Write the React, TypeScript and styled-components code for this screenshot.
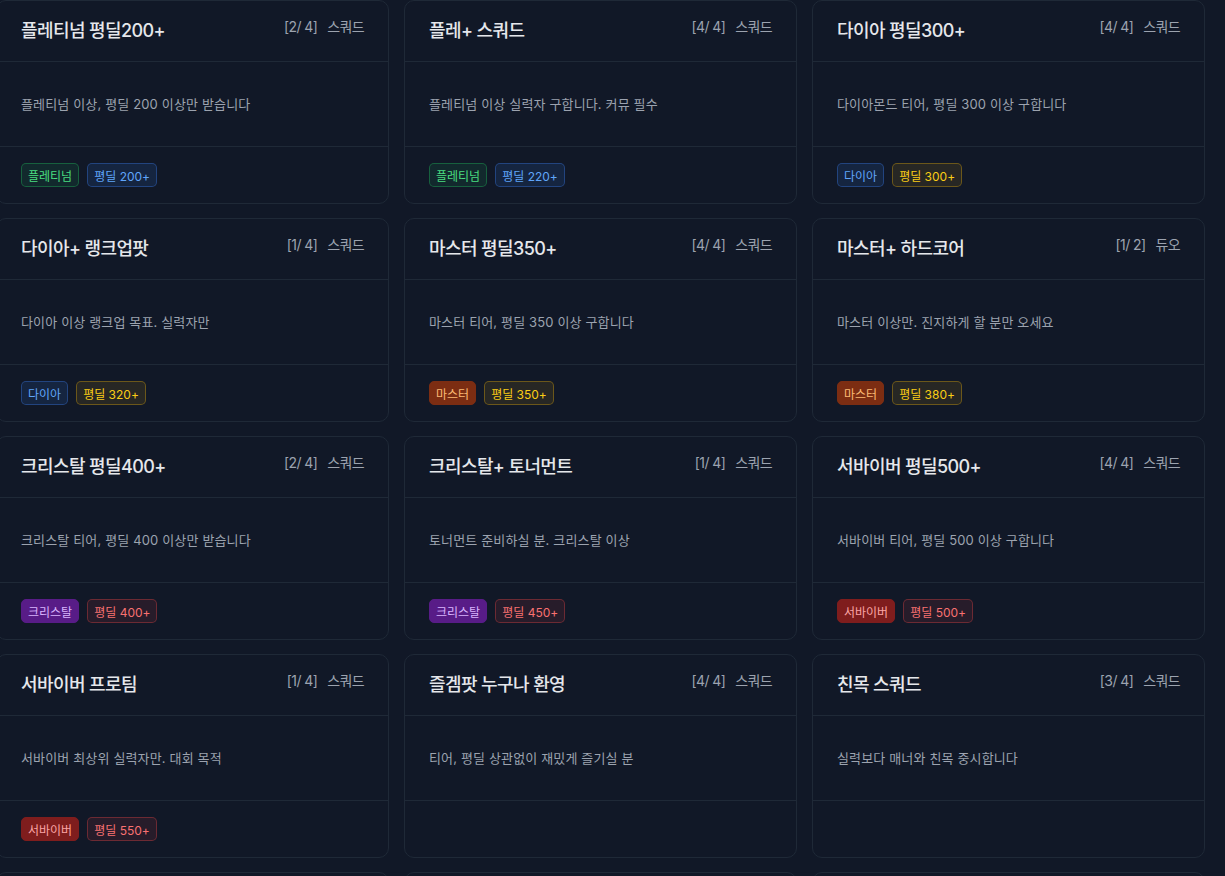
import React from "react";
import styled, { createGlobalStyle, css } from "styled-components";

const GlobalStyle = createGlobalStyle`
  html, body {
    margin: 0;
    padding: 0;
    background: #111827;
    overflow: hidden;
    height: 100%;
  }
  body {
    font-family: "Inter", "Noto Sans CJK KR", sans-serif;
    -webkit-font-smoothing: antialiased;
  }
  * { box-sizing: border-box; }
`;

type Tone = "green" | "blue" | "yellow" | "red" | "master" | "crystal" | "survivor";

const tones: Record<Tone, { bg: string; fg: string; bd: string }> = {
  green: { bg: "rgba(34,197,94,0.10)", fg: "#4ade80", bd: "rgba(34,197,94,0.35)" },
  blue: { bg: "rgba(59,130,246,0.12)", fg: "#60a5fa", bd: "rgba(59,130,246,0.35)" },
  yellow: { bg: "rgba(234,179,8,0.10)", fg: "#facc15", bd: "rgba(234,179,8,0.35)" },
  red: { bg: "rgba(239,68,68,0.10)", fg: "#f87171", bd: "rgba(239,68,68,0.35)" },
  master: { bg: "#7c2d12", fg: "#fdba74", bd: "#7c2d12" },
  crystal: { bg: "#581c87", fg: "#d8b4fe", bd: "#581c87" },
  survivor: { bg: "#7f1d1d", fg: "#fca5a5", bd: "#7f1d1d" },
};

const Grid = styled.div`
  display: grid;
  grid-template-columns: repeat(3, 393px);
  column-gap: 15px;
  row-gap: 14px;
  margin-left: -4px;
`;

const Card = styled.div`
  display: flex;
  flex-direction: column;
  border: 1px solid #1f2937;
  border-radius: 10px;
  background: #111827;
  height: 204px;
`;

const Header = styled.div`
  display: flex;
  justify-content: space-between;
  align-items: flex-start;
  padding: 16px 24px;
  height: 61px;
  border-bottom: 1px solid #1f2937;
`;

const Title = styled.h3`
  margin: 0;
  font-size: 18px;
  line-height: 28px;
  font-weight: 500;
  color: #e5e7eb;
  letter-spacing: -0.6px;
`;

const Meta = styled.div`
  display: flex;
  gap: 10px;
  font-size: 14px;
  line-height: 20px;
  color: #9ca3af;
  letter-spacing: -0.6px;
`;

const Body = styled.div`
  height: 85px;
  padding: 0 24px;
  display: flex;
  align-items: center;
  border-bottom: 1px solid #1f2937;
`;

const Desc = styled.p`
  margin: 0;
  font-size: 13px;
  line-height: 20px;
  color: #9ca3af;
  letter-spacing: 0.15px;
  padding-bottom: 1px;
`;

const Footer = styled.div`
  display: flex;
  align-items: center;
  gap: 8px;
  padding: 0 24px;
  flex: 1;
`;

const Badge = styled.span<{ $tone: Tone }>`
  display: inline-flex;
  align-items: center;
  height: 24px;
  padding: 0 6px;
  border-radius: 5px;
  font-size: 12px;
  ${({ $tone }) => css`
    background: ${tones[$tone].bg};
    color: ${tones[$tone].fg};
    border: 1px solid ${tones[$tone].bd};
  `}
`;

type Party = {
  title: string;
  count: string;
  mode: string;
  desc: string;
  badges: { label: string; tone: Tone }[];
};

const parties: Party[] = [
  { title: "플레티넘 평딜200+", count: "[2/ 4]", mode: "스쿼드", desc: "플레티넘 이상, 평딜 200 이상만 받습니다", badges: [{ label: "플레티넘", tone: "green" }, { label: "평딜 200+", tone: "blue" }] },
  { title: "플레+ 스쿼드", count: "[4/ 4]", mode: "스쿼드", desc: "플레티넘 이상 실력자 구합니다. 커뮤 필수", badges: [{ label: "플레티넘", tone: "green" }, { label: "평딜 220+", tone: "blue" }] },
  { title: "다이아 평딜300+", count: "[4/ 4]", mode: "스쿼드", desc: "다이아몬드 티어, 평딜 300 이상 구합니다", badges: [{ label: "다이아", tone: "blue" }, { label: "평딜 300+", tone: "yellow" }] },
  { title: "다이아+ 랭크업팟", count: "[1/ 4]", mode: "스쿼드", desc: "다이아 이상 랭크업 목표. 실력자만", badges: [{ label: "다이아", tone: "blue" }, { label: "평딜 320+", tone: "yellow" }] },
  { title: "마스터 평딜350+", count: "[4/ 4]", mode: "스쿼드", desc: "마스터 티어, 평딜 350 이상 구합니다", badges: [{ label: "마스터", tone: "master" }, { label: "평딜 350+", tone: "yellow" }] },
  { title: "마스터+ 하드코어", count: "[1/ 2]", mode: "듀오", desc: "마스터 이상만. 진지하게 할 분만 오세요", badges: [{ label: "마스터", tone: "master" }, { label: "평딜 380+", tone: "yellow" }] },
  { title: "크리스탈 평딜400+", count: "[2/ 4]", mode: "스쿼드", desc: "크리스탈 티어, 평딜 400 이상만 받습니다", badges: [{ label: "크리스탈", tone: "crystal" }, { label: "평딜 400+", tone: "red" }] },
  { title: "크리스탈+ 토너먼트", count: "[1/ 4]", mode: "스쿼드", desc: "토너먼트 준비하실 분. 크리스탈 이상", badges: [{ label: "크리스탈", tone: "crystal" }, { label: "평딜 450+", tone: "red" }] },
  { title: "서바이버 평딜500+", count: "[4/ 4]", mode: "스쿼드", desc: "서바이버 티어, 평딜 500 이상 구합니다", badges: [{ label: "서바이버", tone: "survivor" }, { label: "평딜 500+", tone: "red" }] },
  { title: "서바이버 프로팀", count: "[1/ 4]", mode: "스쿼드", desc: "서바이버 최상위 실력자만. 대회 목적", badges: [{ label: "서바이버", tone: "survivor" }, { label: "평딜 550+", tone: "red" }] },
  { title: "즐겜팟 누구나 환영", count: "[4/ 4]", mode: "스쿼드", desc: "티어, 평딜 상관없이 재밌게 즐기실 분", badges: [] },
  { title: "친목 스쿼드", count: "[3/ 4]", mode: "스쿼드", desc: "실력보다 매너와 친목 중시합니다", badges: [] },
];

export default function App() {
  return (
    <>
      <GlobalStyle />
      <Grid>
        {parties.map((p, i) => (
          <Card key={i}>
            <Header>
              <Title>{p.title}</Title>
              <Meta>
                <span>{p.count}</span>
                <span>{p.mode}</span>
              </Meta>
            </Header>
            <Body>
              <Desc>{p.desc}</Desc>
            </Body>
            <Footer>
              {p.badges.map((b, j) => (
                <Badge key={j} $tone={b.tone}>
                  {b.label}
                </Badge>
              ))}
            </Footer>
          </Card>
        ))}
        <Card />
        <Card />
        <Card />
      </Grid>
    </>
  );
}
